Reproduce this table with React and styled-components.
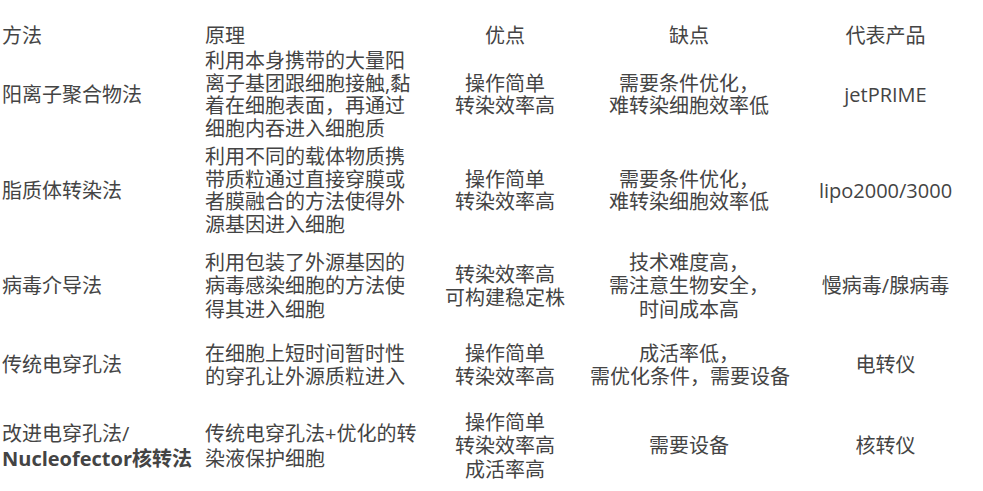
import React from "react";
import styled, { createGlobalStyle } from "styled-components";

const GlobalStyle = createGlobalStyle`
  html, body {
    margin: 0;
    padding: 0;
    background: #ffffff;
  }
  body {
    font-family: "Open Sans", "Noto Sans CJK SC", sans-serif;
    color: #444444;
  }
`;

const Table = styled.div`
  width: 983px;
  height: 491px;
  padding-top: 10px;
  box-sizing: border-box;
  display: grid;
  grid-template-columns: 203px 217px 170px 198px 195px;
  grid-template-rows: 50px 70px 122px 68px 90px 72px;
  font-size: 20px;
`;

const Cell = styled.div`
  align-self: center;
  white-space: nowrap;
  line-height: ${(p) => p.$lh || 23}px;
  text-align: ${(p) => (p.$center ? "center" : "left")};
  padding-left: ${(p) => (p.$center ? "0" : "2px")};
`;

const Bold = styled.span`
  font-weight: 700;
`;

const lines = (arr) =>
  arr.map((t, i) => (
    <React.Fragment key={i}>
      {i > 0 && <br />}
      {t}
    </React.Fragment>
  ));

const rows = [
  {
    lh: 22.5,
    method: ["阳离子聚合物法"],
    principle: [
      "利用本身携带的大量阳",
      "离子基团跟细胞接触,黏",
      "着在细胞表面，再通过",
      "细胞内吞进入细胞质",
    ],
    pros: ["操作简单", "转染效率高"],
    cons: ["需要条件优化，", "难转染细胞效率低"],
    product: "jetPRIME",
  },
  {
    lh: 22.5,
    method: ["脂质体转染法"],
    principle: [
      "利用不同的载体物质携",
      "带质粒通过直接穿膜或",
      "者膜融合的方法使得外",
      "源基因进入细胞",
    ],
    pros: ["操作简单", "转染效率高"],
    cons: ["需要条件优化，", "难转染细胞效率低"],
    product: "lipo2000/3000",
  },
  {
    lh: 23.5,
    method: ["病毒介导法"],
    principle: ["利用包装了外源基因的", "病毒感染细胞的方法使", "得其进入细胞"],
    pros: ["转染效率高", "可构建稳定株"],
    cons: ["技术难度高，", "需注意生物安全，", "时间成本高"],
    product: "慢病毒/腺病毒",
  },
  {
    lh: 23.5,
    method: ["传统电穿孔法"],
    principle: ["在细胞上短时间暂时性", "的穿孔让外源质粒进入"],
    pros: ["操作简单", "转染效率高"],
    cons: ["成活率低，", "需优化条件，需要设备"],
    product: "电转仪",
  },
  {
    lh: 23.5,
    leftLh: 25,
    method: ["改进电穿孔法/", <Bold key="b">Nucleofector核转法</Bold>],
    principle: ["传统电穿孔法+优化的转", "染液保护细胞"],
    pros: ["操作简单", "转染效率高", "成活率高"],
    cons: ["需要设备"],
    product: "核转仪",
  },
];

export default function App() {
  return (
    <>
      <GlobalStyle />
      <Table>
        <Cell>方法</Cell>
        <Cell>原理</Cell>
        <Cell $center>优点</Cell>
        <Cell $center>缺点</Cell>
        <Cell $center>代表产品</Cell>
        {rows.map((r, i) => (
          <React.Fragment key={i}>
            <Cell $lh={r.leftLh || r.lh}>{lines(r.method)}</Cell>
            <Cell $lh={r.leftLh || r.lh}>{lines(r.principle)}</Cell>
            <Cell $center $lh={r.lh}>{lines(r.pros)}</Cell>
            <Cell $center $lh={r.lh}>{lines(r.cons)}</Cell>
            <Cell $center $lh={r.lh}>{r.product}</Cell>
          </React.Fragment>
        ))}
      </Table>
    </>
  );
}
